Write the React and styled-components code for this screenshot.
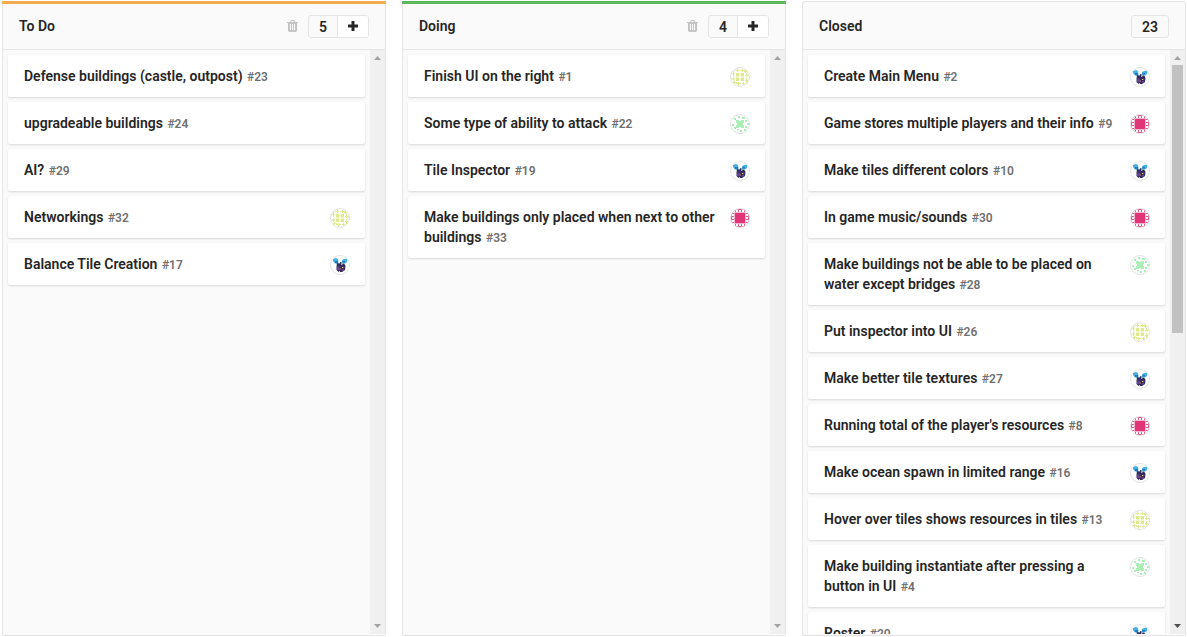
import React, { useState } from 'react';
import styled, { createGlobalStyle } from 'styled-components';

const GlobalStyle = createGlobalStyle`
  * { box-sizing: border-box; }
  body {
    margin: 0;
    background: #fff;
    color: #262626;
    font: 14px/20px Roboto, "Liberation Sans", sans-serif;
  }
`;

const Board = styled.main`
  display: flex;
  gap: 16px;
  height: 100vh;
  padding: 1px 1px 1px 2px;
`;

const Column = styled.section`
  display: flex;
  flex: 1 1 0;
  flex-direction: column;
  min-width: 0;
  background: #fafafa;
  border: 1px solid #e5e5e5;
  border-top: ${p => (p.$accent ? 'none' : '1px solid #e5e5e5')};
  border-radius: 2px;
`;

const ColumnHeader = styled.header`
  display: flex;
  flex: none;
  align-items: center;
  height: ${p => (p.$accent ? '49px' : '48px')};
  margin: ${p => (p.$accent ? '0 -1px' : '0')};
  padding: ${p => (p.$accent ? '0 17px 1px' : '1px 16px 0')};
  border-top: ${p => (p.$accent ? `3px solid ${p.$accent}` : 'none')};
  border-bottom: 1px solid #e5e5e5;
`;

const ColumnTitle = styled.h2`
  flex: 1;
  margin: 0;
  font-size: 14px;
  font-weight: 600;
  line-height: 20px;
`;

const TrashButton = styled.button`
  display: flex;
  margin: 0 10px 0 0;
  padding: 0;
  border: 0;
  background: none;
  color: #c4c4c4;
  cursor: pointer;
`;

const CountGroup = styled.div`
  display: flex;
  height: 23px;
  border: 1px solid #e5e5e5;
  border-radius: 3px;
  overflow: hidden;
`;

const Count = styled.span`
  min-width: 28px;
  padding: 0 10px;
  font-weight: 600;
  line-height: 22px;
  text-align: center;
`;

const AddButton = styled.button`
  display: flex;
  align-items: center;
  justify-content: center;
  width: 31px;
  padding: 0;
  border: 0;
  border-left: 1px solid #e5e5e5;
  background: #fff;
  color: #262626;
  cursor: pointer;
`;

const ColumnBody = styled.div`
  display: flex;
  flex: 1;
  min-height: 0;
  padding-bottom: 1px;
`;

const CardList = styled.ul`
  flex: 1;
  min-width: 0;
  margin: 0;
  padding: 5px 5px 0;
  overflow-y: auto;
  scrollbar-width: none;
  list-style: none;
`;

const Card = styled.li`
  display: flex;
  align-items: flex-start;
  gap: 10px;
  margin-bottom: 5px;
  padding: 11px 15px 11px 16px;
  background: #fff;
  border-radius: 2px;
  box-shadow: 0 1px 2px rgba(186, 186, 186, 0.5);
`;

const CardTitle = styled.h3`
  flex: 1;
  min-width: 0;
  margin: 0;
  font-size: 14px;
  font-weight: 600;
  line-height: 20px;
`;

const CardLink = styled.a`
  color: inherit;
  text-decoration: none;
`;

const CardNumber = styled.span`
  margin-left: 1px;
  color: #707070;
  font-size: 12px;
  line-height: 1;
`;

const AvatarFrame = styled.svg`
  flex: none;
  width: 20px;
  height: 20px;
  margin: 1px 0 -1px;
`;

const Scrollbar = styled.div`
  display: flex;
  flex: none;
  flex-direction: column;
  width: 15px;
  background: #f0f0f0;
`;

const ScrollArrow = styled.svg`
  flex: none;
  width: 15px;
  height: 15px;
  fill: ${p => (p.$active ? '#505050' : '#a3a3a3')};
`;

const Track = styled.div`
  flex: 1;
  min-height: 0;
  padding: 0 2px;
`;

const Thumb = styled.div`
  height: 100%;
  background: #c1c1c1;
`;

const patterns = {
  yellow: {
    color: '#dfe98f',
    d: 'M6 6h3.4v3.4H6zM10.6 6H14v3.4h-3.4zM6 10.6h3.4V14H6zM10.6 10.6H14V14h-3.4zM3 4h1.3v5H3zM1.5 6h3v1h-3zM5 3h4v1H5zM7 1h1.3v4H7zM10 3h5v1h-5zM12 2h1v3h-1zM15 3h1v3h-1zM14 4h4v1h-4zM16 6h1.3v4H16zM15 8h4v1h-4zM1 11.5h4v1H1zM3 10h1.3v4H3zM16 11h1.3v5H16zM15 13h3v1h-3zM3 15h4v1H3zM4 14h1v3H4zM6 16h5v1H6zM8 15h1.3v4H8zM12 16h3v1h-3zM13 15h1v3h-1z',
  },
  green: {
    color: '#a9efb6',
    d: 'M6 6h3v1h2V6h3v3h-1v2h1v3h-3v-1H9v1H6v-3h1V9H6zM8 2h2v2H8zM4 4h2v2H4zM12 3h3v2h-3zM15 6h2v2h-2zM2 10h2v2H2zM4 13h2v2H4zM17 9h2v2h-2zM15 12h2v2h-2zM10 16h2v2h-2zM7 15h2v1H7zM14 15h2v2h-2z',
  },
};

function Avatar({ kind }) {
  return (
    <AvatarFrame viewBox="0 0 20 20" role="img" aria-label="Assignee">
      <circle cx="10" cy="10" r="9.5" fill="#fff" />
      {patterns[kind] && <path d={patterns[kind].d} fill={patterns[kind].color} />}
      {kind === 'pink' && (
        <>
          <circle cx="10" cy="10" r="9.3" fill="#e4558a" />
          <path
            fill="#fff"
            d="M6 2h2v2H6zM9 2h2v2H9zM12 2h2v2h-2zM6 16h2v2H6zM9 16h2v2H9zM12 16h2v2h-2zM2 6h2v2H2zM2 9h2v2H2zM2 12h2v2H2zM16 6h2v2h-2zM16 9h2v2h-2zM16 12h2v2h-2zM3 3h2v2H3zM15 3h2v2h-2zM3 15h2v2H3zM15 15h2v2h-2z"
          />
          <path fill="#e23577" stroke="#f3b3cc" strokeWidth="1" d="M4.500 4.500h11v11h-11z" />
        </>
      )}
      {kind === 'creature' && (
        <>
          <path fill="#45b0e2" d="M3 4l3-1 2 1 .5 3.500-2 1.500-2-1L3 6zM12 5l2-1 3-.5 .5 2.500-1.500 2-2.500 1-1.500-1z" />
          <path fill="#2878ba" d="M5 6h3v2H5zM12.500 6H15v1.500h-2.500z" />
          <path fill="#332c60" d="M7 8l2.500 .5 1-1.500h1v1.500l3 .5 1 2-.5 4-3 2H8.500L6.500 15V11.500z" />
          <path fill="#69458f" d="M7 11.500h2.500V15H7zM12 14h2v1.500h-2z" />
          <path fill="#e8d678" d="M11 8.500h1.300v1.300H11zM12 12h1.300v1H12zM8.800 16H10v1.500H8.800z" />
          <path fill="#d87888" d="M9.500 13.500H11v1H9.500z" />
        </>
      )}
      <circle cx="10" cy="10" r="9.5" fill="none" stroke="#e3e3e3" />
    </AvatarFrame>
  );
}

const TrashIcon = () => (
  <svg width="11" height="12" viewBox="0 0 11 12" fill="currentColor" aria-hidden="true">
    <path
      fillRule="evenodd"
      d="M0 2h3L4 0h3l1 2h3v1h-1v8l-1 1H2l-1-1V3H0zM4 2h3L6.500 1h-2zM3 4v6h1V4zM5 4v6h1V4zM7 4v6h1V4z"
    />
  </svg>
);

const PlusIcon = () => (
  <svg width="10" height="10" viewBox="0 0 10 10" fill="currentColor" aria-hidden="true">
    <path d="M3.500 0h3v3.500H10v3H6.500V10h-3V6.500H0v-3h3.500z" />
  </svg>
);

const columns = [
  {
    title: 'To Do',
    accent: '#f0ad4e',
    count: 5,
    cards: [
      ['Defense buildings (castle, outpost)', 23],
      ['upgradeable buildings', 24],
      ['AI?', 29],
      ['Networkings', 32, 'yellow'],
      ['Balance Tile Creation', 17, 'creature'],
    ],
  },
  {
    title: 'Doing',
    accent: '#5cb85c',
    count: 4,
    cards: [
      ['Finish UI on the right', 1, 'yellow'],
      ['Some type of ability to attack', 22, 'green'],
      ['Tile Inspector', 19, 'creature'],
      ['Make buildings only placed when next to other buildings', 33, 'pink'],
    ],
  },
  {
    title: 'Closed',
    count: 23,
    cards: [
      ['Create Main Menu', 2, 'creature'],
      ['Game stores multiple players and their info', 9, 'pink'],
      ['Make tiles different colors', 10, 'creature'],
      ['In game music/sounds', 30, 'pink'],
      ['Make buildings not be able to be placed on water except bridges', 28, 'green'],
      ['Put inspector into UI', 26, 'yellow'],
      ['Make better tile textures', 27, 'creature'],
      ["Running total of the player's resources", 8, 'pink'],
      ['Make ocean spawn in limited range', 16, 'creature'],
      ['Hover over tiles shows resources in tiles', 13, 'yellow'],
      ['Make building instantiate after pressing a button in UI', 4, 'green'],
      ['Roster', 20, 'creature'],
    ],
  },
];

// Thumb length as a share of the track, in percent.
const THUMB_SIZE = 48.4;

function BoardColumn({ title, accent, count, cards }) {
  const [scroll, setScroll] = useState(0);
  const scrollable = cards.length < count;
  const onScroll = e => {
    const el = e.currentTarget;
    setScroll(el.scrollTop / Math.max(1, el.scrollHeight - el.clientHeight));
  };
  return (
    <Column $accent={accent}>
      <ColumnHeader $accent={accent}>
        <ColumnTitle>{title}</ColumnTitle>
        {accent && (
          <TrashButton type="button" aria-label={`Delete ${title} list`}>
            <TrashIcon />
          </TrashButton>
        )}
        <CountGroup>
          <Count>{count}</Count>
          {accent && (
            <AddButton type="button" aria-label={`New issue in ${title}`}>
              <PlusIcon />
            </AddButton>
          )}
        </CountGroup>
      </ColumnHeader>
      <ColumnBody>
        <CardList onScroll={onScroll}>
          {cards.map(([text, number, avatar]) => (
            <Card key={number}>
              <CardTitle>
                <CardLink href={`#${number}`}>{text}</CardLink>{' '}
                <CardNumber>#{number}</CardNumber>
              </CardTitle>
              {avatar && <Avatar kind={avatar} />}
            </Card>
          ))}
        </CardList>
        <Scrollbar aria-hidden="true">
          <ScrollArrow viewBox="0 0 15 15">
            <path d="M4 10l3.500-4L11 10z" />
          </ScrollArrow>
          <Track>
            {scrollable && (
              <Thumb
                style={{
                  height: `${THUMB_SIZE}%`,
                  transform: `translateY(${(scroll * (100 - THUMB_SIZE) * 100) / THUMB_SIZE}%)`,
                }}
              />
            )}
          </Track>
          <ScrollArrow $active={scrollable} viewBox="0 0 15 15">
            <path d="M4 5l3.500 4L11 5z" />
          </ScrollArrow>
        </Scrollbar>
      </ColumnBody>
    </Column>
  );
}

export default function App() {
  return (
    <>
      <GlobalStyle />
      <Board>
        {columns.map(column => (
          <BoardColumn key={column.title} {...column} />
        ))}
      </Board>
    </>
  );
}
